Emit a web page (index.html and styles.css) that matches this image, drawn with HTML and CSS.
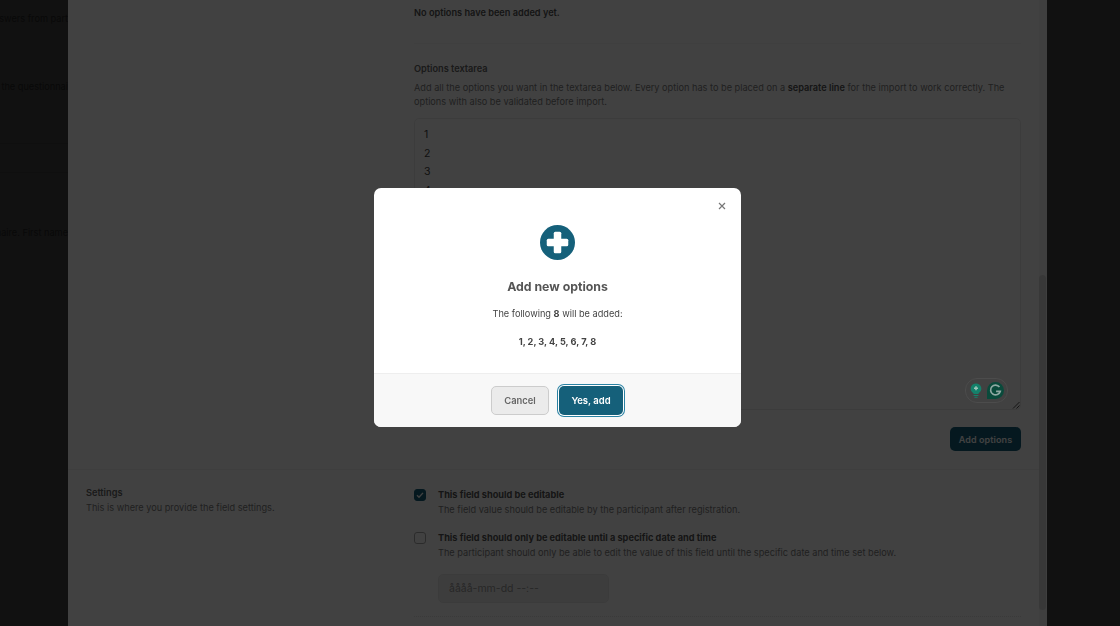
FILE: index.html
```html
<!DOCTYPE html>
<html lang="en">
<head>
    <meta charset="UTF-8">
    <meta name="viewport" content="width=device-width, initial-scale=1.0">
    <link rel="stylesheet" href="styles.css">
    <title>Add new options</title>
</head>
<body>
    <div class="page">
        <!-- page behind the slide-over, only the cut off ends of the lines show -->
        <div class="behind">
            <div class="behind-line first">swers from part</div>
            <div class="behind-line second">the questionnai</div>
            <hr class="behind-rule rule-a">
            <hr class="behind-rule rule-b">
            <div class="behind-line third">naire. First name</div>
        </div>

        <main class="panel">
            <section class="row row-options">
                <div class="row-side"></div>
                <div class="row-main">
                    <div class="no-options">No options have been added yet.</div>
                    <hr class="soft-line">
                    <h3 class="label">Options textarea</h3>
                    <p class="help">Add all the options you want in the textarea below. Every option has to be placed on a <b>separate line</b> for the import to work correctly. The options with also be validated before import.</p>
                    <div class="textarea">
                        <div>1</div>
                        <div>2</div>
                        <div>3</div>
                        <div>4</div>
                        <div class="grammarly">
                            <svg width="12" height="15" viewBox="0 0 14 18">
                                <path d="M7 0.5a6.3 6.3 0 0 1 3.6 11.5c-.6.4-.8.8-.8 1.3H4.2c0-.5-.2-.9-.8-1.3A6.3 6.3 0 0 1 7 .5z" fill="#14806a"/>
                                <path d="M7 4v4.800M4.600 6.400h4.800" stroke="#9cc4b8" stroke-width="1.800"/>
                                <path d="M4.600 15h4.800M5.600 17h2.800" stroke="#14806a" stroke-width="1.300" stroke-linecap="round"/>
                            </svg>
                            <svg width="17" height="17" viewBox="0 0 18 18">
                                <path d="M9 0a9 9 0 1 1 0 18H0V9a9 9 0 0 1 9-9z" fill="#0a4a3b"/>
                                <path d="M13.200 5.400A5.200 5.200 0 1 0 14 10H9.600" fill="none" stroke="#8fa8a2" stroke-width="1.800"/>
                            </svg>
                        </div>
                        <svg class="resize-grip" width="8" height="8" viewBox="0 0 8 8">
                            <path d="M1 7.500L7.500 1M4.500 7.500L7.500 4.500" stroke="#555" stroke-width="1"/>
                        </svg>
                    </div>
                    <div class="actions">
                        <button class="btn-add">Add options</button>
                    </div>
                </div>
            </section>

            <section class="row row-settings">
                <div class="row-side">
                    <h3 class="label">Settings</h3>
                    <p class="help">This is where you provide the field settings.</p>
                </div>
                <div class="row-main">
                    <div class="check-row">
                        <span class="checkbox checked">
                            <svg width="8" height="8" viewBox="0 0 8 8"><path d="M1 4.300l2 2 4-4.400" fill="none" stroke="#fff" stroke-width="1.400"/></svg>
                        </span>
                        <div>
                            <div class="check-title">This field should be editable</div>
                            <p class="help">The field value should be editable by the participant after registration.</p>
                        </div>
                    </div>
                    <div class="check-row">
                        <span class="checkbox"></span>
                        <div>
                            <div class="check-title">This field should only be editable until a specific date and time</div>
                            <p class="help">The participant should only be able to edit the value of this field until the specific date and time set below.</p>
                            <div class="date-input">åååå-mm-dd --:--</div>
                        </div>
                    </div>
                    <hr class="soft-line dotted">
                </div>
            </section>

            <div class="scroll-track">
                <div class="scroll-thumb"></div>
            </div>
        </main>
    </div>

    <div class="overlay">
        <div class="modal">
            <button class="modal-close" aria-label="Close">
                <svg width="8" height="8" viewBox="0 0 8 8"><path d="M1 1l6 6M7 1L1 7" stroke="#777" stroke-width="1.200"/></svg>
            </button>
            <div class="modal-body">
                <svg class="modal-icon" width="35" height="35" viewBox="0 0 35 35">
                    <circle cx="17.500" cy="17.500" r="17.500" fill="#15607a"/>
                    <rect x="6.750" y="13.750" width="21.500" height="7.500" rx="1.500" fill="#fff"/>
                    <rect x="13.750" y="6.750" width="7.500" height="21.500" rx="1.500" fill="#fff"/>
                </svg>
                <h2 class="modal-title">Add new options</h2>
                <p class="modal-text">The following <b>8</b> will be added:</p>
                <p class="modal-list">1, 2, 3, 4, 5, 6, 7, 8</p>
            </div>
            <div class="modal-footer">
                <button class="btn-cancel">Cancel</button>
                <button class="btn-yes">Yes, add</button>
            </div>
        </div>
    </div>
</body>
</html>
```

FILE: styles.css
```css
* {
    box-sizing: border-box;
}
html, body {
    height: 100%;
}
body {
    margin: 0;
    overflow: hidden;
    font-family: Inter, "Liberation Sans", sans-serif;
    background-color: #444;
    color: #6b7280;
}
.page {
    display: flex;
    height: 626px;
    overflow: hidden;
    padding-right: 73px;
}
.behind {
    width: 68px;
    flex-shrink: 0;
    display: flex;
    flex-direction: column;
    align-items: flex-end;
    overflow: hidden;
    color: #222;
    font-size: 9.200px;
    line-height: 14px;
    padding-top: 12px;
}
.behind-line {
    white-space: nowrap;
}
.behind-line.second {
    margin-top: 54px;
}
.behind-line.third {
    margin-top: 53px;
}
.behind-rule {
    align-self: stretch;
    margin: 0;
    border: none;
    border-top: 1px solid #3c3c3c;
}
.rule-a {
    margin-top: 49px;
}
.rule-b {
    margin-top: 28px;
}
.panel {
    position: relative;
    flex: 1;
    background-color: #fff;
}
.row {
    display: flex;
}
.row-side {
    width: 328px;
    flex-shrink: 0;
    padding: 18px;
}
.row-main {
    flex: 1;
    padding: 0 26px 0 18px;
}
.row-options {
    height: 470px;
    border-bottom: 1px solid #f3f3f3;
}
.row-settings .row-side {
    padding-top: 16px;
}
.row-settings .row-main {
    padding-top: 17px;
}
.no-options {
    margin-top: 6px;
    font-size: 9.200px;
    line-height: 14px;
    font-weight: 600;
    color: #555;
}
.soft-line {
    margin: 23px 0 0;
    border: none;
    border-top: 1px solid #f7f7f7;
}
.soft-line.dotted {
    margin-top: 0;
    border-top: 1px dotted #e4e4e4;
}
.label {
    margin: 18px 0 0;
    font-size: 9.200px;
    line-height: 14px;
    font-weight: 600;
    color: #666;
}
.row-settings .label {
    margin: 0;
}
.help {
    margin: 5px 0 0;
    font-size: 9.200px;
    line-height: 14px;
    color: #808080;
}
.row-side .help {
    margin-top: 1px;
}
.help b {
    color: #555;
    font-weight: 600;
}
.textarea {
    position: relative;
    height: 292px;
    margin-top: 9px;
    padding: 7px 9px 6px;
    border: 1px solid #ececec;
    border-radius: 5px;
    font-size: 10.500px;
    line-height: 18.500px;
    color: #444;
}
/* the extension widget is drawn above the dimmed layer */
.grammarly {
    position: absolute;
    z-index: 2;
    right: 12px;
    bottom: 6px;
    display: flex;
    align-items: center;
    gap: 5px;
    height: 25px;
    padding: 0 3px 0 4px;
    border: 1px solid #4c4c4c;
    border-radius: 12px;
}
.resize-grip {
    position: absolute;
    right: 0;
    bottom: 0;
}
.actions {
    display: flex;
    justify-content: flex-end;
    margin-top: 17px;
}
.btn-add {
    width: 71px;
    height: 24px;
    padding: 0;
    border: none;
    border-radius: 5px;
    font-family: inherit;
    font-size: 9px;
    letter-spacing: 0.1px;
    font-weight: 600;
    color: #fff;
    background-color: #15607a;
}
.check-row {
    display: flex;
    gap: 12px;
    margin-bottom: 13px;
}
.checkbox {
    display: flex;
    align-items: center;
    justify-content: center;
    width: 12px;
    height: 12px;
    margin-top: 2px;
    flex-shrink: 0;
    border: 1px solid #aaa;
    border-radius: 3px;
}
.checkbox.checked {
    border-color: #15607a;
    background-color: #15607a;
}
.check-title {
    margin-top: 1px;
    font-size: 9.200px;
    line-height: 14px;
    font-weight: 700;
    color: #555;
}
.check-row .help {
    margin-top: 1px;
}
.date-input {
    display: flex;
    align-items: center;
    width: 171px;
    height: 29px;
    margin-top: 14px;
    padding-left: 10px;
    border: 1px solid #e8e8e8;
    border-radius: 5px;
    background-color: #f0f0f0;
    font-size: 10.500px;
    color: #999;
}
.scroll-track {
    position: absolute;
    top: 0;
    bottom: 0;
    right: 0;
    width: 8px;
    background-color: #f5f5f5;
}
.scroll-thumb {
    width: 7px;
    height: 335px;
    margin: 275px 0 0 0;
    border-radius: 4px;
    background-color: #dcdcdc;
}
.overlay {
    position: fixed;
    z-index: 1;
    inset: 0;
    display: flex;
    align-items: center;
    justify-content: center;
    padding: 0 5px 11px 0;
    background-color: rgba(0, 0, 0, 0.745);
}
.modal {
    position: relative;
    width: 367px;
    height: 239px;
    display: flex;
    flex-direction: column;
    border-radius: 7px;
    overflow: hidden;
    background-color: #fff;
}
.modal-close {
    position: absolute;
    top: 14px;
    right: 15px;
    display: flex;
    padding: 0;
    border: none;
    background: none;
}
.modal-body {
    flex: 1;
    display: flex;
    flex-direction: column;
    align-items: center;
    padding-top: 37px;
    text-align: center;
}
.modal-title {
    margin: 17.500px 0 0;
    font-size: 12.300px;
    line-height: 18px;
    font-weight: 700;
    color: #555;
}
.modal-text {
    margin: 11.500px 0 0;
    font-size: 9.200px;
    line-height: 14px;
    color: #444;
}
.modal-text b {
    font-weight: 700;
}
.modal-list {
    margin: 14px 0 0;
    font-size: 9.200px;
    line-height: 14px;
    font-weight: 700;
    color: #444;
}
.modal-footer {
    height: 54px;
    display: flex;
    align-items: center;
    justify-content: center;
    gap: 10px;
    padding-right: 1px;
    border-top: 1px solid #eee;
    background-color: #f8f8f8;
}
.btn-cancel {
    width: 58px;
    height: 29px;
    padding: 0 0 1px;
    border: 1px solid #ccc;
    border-radius: 5px;
    font-family: inherit;
    font-size: 9.400px;
    font-weight: 600;
    color: #666;
    background-color: #ebebeb;
}
.btn-yes {
    width: 64px;
    height: 29px;
    padding: 0 0 1px;
    border: none;
    border-radius: 5px;
    font-family: inherit;
    font-size: 9.500px;
    font-weight: 600;
    color: #fff;
    background-color: #15607a;
    box-shadow: 0 0 0 1px #fff, 0 0 0 2px #2a82a3;
}
```
